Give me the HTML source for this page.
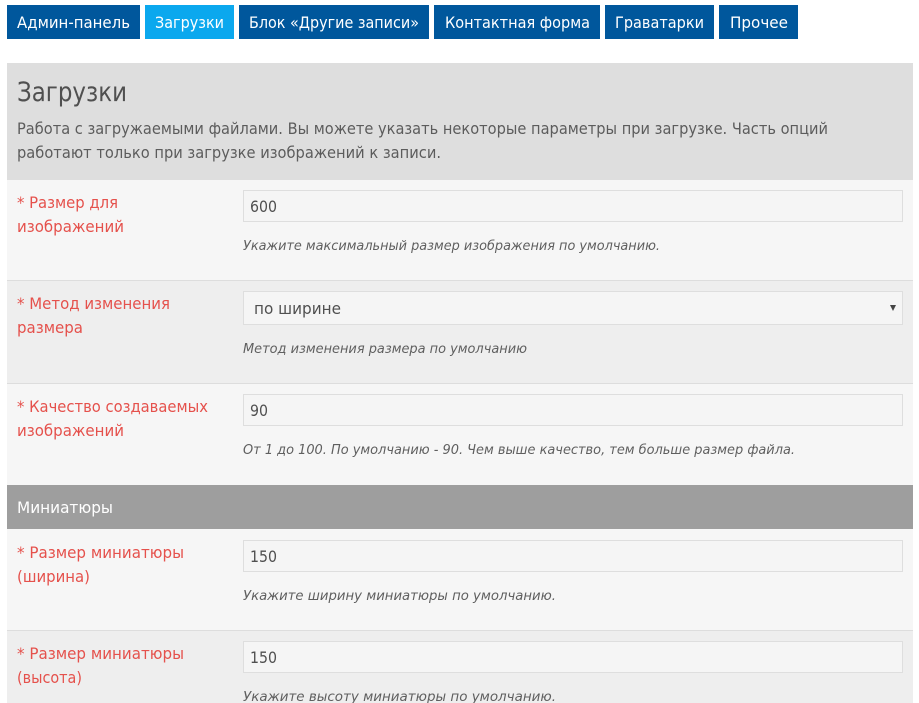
<!DOCTYPE html>
<html lang="ru">
<head>
<meta charset="utf-8">
<title>Загрузки</title>
<style>
html,body{margin:0;padding:0;background:#fff}
body{width:919px;height:703px;overflow:hidden;position:relative;font-family:"DejaVu Sans","Liberation Sans",sans-serif}
.b{position:absolute;box-sizing:border-box}
.tab{background:#00579c;top:5px;height:34px}
.tab.on{background:#0ba8ee}
.inp{left:243px;width:660px;background:#f5f5f5;border:1px solid #dedede}
svg{position:absolute;left:0;top:0}
text{font-family:"DejaVu Sans","Liberation Sans",sans-serif}
.t{font-size:16px;fill:#fff}
.h{font-size:27px;fill:#505050}
.p{font-size:16px;fill:#5c5c5c}
.l{font-size:16px;fill:#e5514c}
.v{font-size:16px;fill:#505050}
.i{font-size:13.5px;font-style:italic;fill:#5f5f5f}
.s{font-size:16px;fill:#fff}
</style>
</head>
<body>
<div class="b tab" style="left:7px;width:133px"></div>
<div class="b tab on" style="left:145px;width:89px"></div>
<div class="b tab" style="left:239px;width:190px"></div>
<div class="b tab" style="left:434px;width:166px"></div>
<div class="b tab" style="left:605px;width:109px"></div>
<div class="b tab" style="left:719px;width:79px"></div>

<div class="b" style="left:7px;top:63px;width:906px;height:117px;background:#dedede"></div>
<div class="b" style="left:7px;top:180px;width:906px;height:101px;background:#f6f6f6;border-bottom:1px solid #ddd"></div>
<div class="b" style="left:7px;top:281px;width:906px;height:103px;background:#eeeeee;border-bottom:1px solid #ddd"></div>
<div class="b" style="left:7px;top:384px;width:906px;height:101px;background:#f6f6f6"></div>
<div class="b" style="left:7px;top:485px;width:906px;height:44px;background:#9e9e9e"></div>
<div class="b" style="left:7px;top:529px;width:906px;height:102px;background:#f6f6f6;border-bottom:1px solid #ddd"></div>
<div class="b" style="left:7px;top:631px;width:906px;height:72px;background:#eeeeee"></div>

<div class="b inp" style="top:190px;height:32px"></div>
<div class="b inp" style="top:291px;height:34px"></div>
<div class="b inp" style="top:394px;height:32px"></div>
<div class="b inp" style="top:540px;height:32px"></div>
<div class="b inp" style="top:641px;height:32px"></div>

<svg width="919" height="703" viewBox="0 0 919 703">
<text class="t" x="17" y="28" textLength="113" lengthAdjust="spacingAndGlyphs">Админ-панель</text>
<text class="t" x="155" y="28" textLength="69" lengthAdjust="spacingAndGlyphs">Загрузки</text>
<text class="t" x="249" y="28" textLength="170" lengthAdjust="spacingAndGlyphs">Блок «Другие записи»</text>
<text class="t" x="445" y="28" textLength="145" lengthAdjust="spacingAndGlyphs">Контактная форма</text>
<text class="t" x="615" y="28" textLength="89" lengthAdjust="spacingAndGlyphs">Граватарки</text>
<text class="t" x="730" y="28" textLength="58" lengthAdjust="spacingAndGlyphs">Прочее</text>

<text class="h" x="17" y="101" textLength="110" lengthAdjust="spacingAndGlyphs">Загрузки</text>
<text class="p" x="17" y="134" textLength="811" lengthAdjust="spacingAndGlyphs">Работа с загружаемыми файлами. Вы можете указать некоторые параметры при загрузке. Часть опций</text>
<text class="p" x="17" y="158" textLength="424" lengthAdjust="spacingAndGlyphs">работают только при загрузке изображений к записи.</text>

<text class="l" x="17" y="208" textLength="101" lengthAdjust="spacingAndGlyphs">* Размер для</text>
<text class="l" x="17" y="232" textLength="107" lengthAdjust="spacingAndGlyphs">изображений</text>
<text class="v" x="250" y="212" textLength="27" lengthAdjust="spacingAndGlyphs">600</text>
<text class="i" x="243" y="250" textLength="417" lengthAdjust="spacingAndGlyphs">Укажите максимальный размер изображения по умолчанию.</text>

<text class="l" x="17" y="309" textLength="153" lengthAdjust="spacingAndGlyphs">* Метод изменения</text>
<text class="l" x="17" y="333" textLength="66" lengthAdjust="spacingAndGlyphs">размера</text>
<text class="v" x="254" y="314" textLength="87" lengthAdjust="spacingAndGlyphs">по ширине</text>
<polygon points="890,305 896,305 893,311" fill="#444"/>
<text class="i" x="243" y="353" textLength="284" lengthAdjust="spacingAndGlyphs">Метод изменения размера по умолчанию</text>

<text class="l" x="17" y="412" textLength="191" lengthAdjust="spacingAndGlyphs">* Качество создаваемых</text>
<text class="l" x="17" y="436" textLength="107" lengthAdjust="spacingAndGlyphs">изображений</text>
<text class="v" x="250" y="416" textLength="18" lengthAdjust="spacingAndGlyphs">90</text>
<text class="i" x="243" y="454" textLength="552" lengthAdjust="spacingAndGlyphs">От 1 до 100. По умолчанию - 90. Чем выше качество, тем больше размер файла.</text>

<text class="s" x="17" y="513" textLength="96" lengthAdjust="spacingAndGlyphs">Миниатюры</text>

<text class="l" x="17" y="558" textLength="167" lengthAdjust="spacingAndGlyphs">* Размер миниатюры</text>
<text class="l" x="17" y="582" textLength="73" lengthAdjust="spacingAndGlyphs">(ширина)</text>
<text class="v" x="250" y="562" textLength="27" lengthAdjust="spacingAndGlyphs">150</text>
<text class="i" x="243" y="600" textLength="313" lengthAdjust="spacingAndGlyphs">Укажите ширину миниатюры по умолчанию.</text>

<text class="l" x="17" y="659" textLength="167" lengthAdjust="spacingAndGlyphs">* Размер миниатюры</text>
<text class="l" x="17" y="683" textLength="65" lengthAdjust="spacingAndGlyphs">(высота)</text>
<text class="v" x="250" y="663" textLength="27" lengthAdjust="spacingAndGlyphs">150</text>
<text class="i" x="243" y="701" textLength="313" lengthAdjust="spacingAndGlyphs">Укажите высоту миниатюры по умолчанию.</text>
</svg>
</body>
</html>
